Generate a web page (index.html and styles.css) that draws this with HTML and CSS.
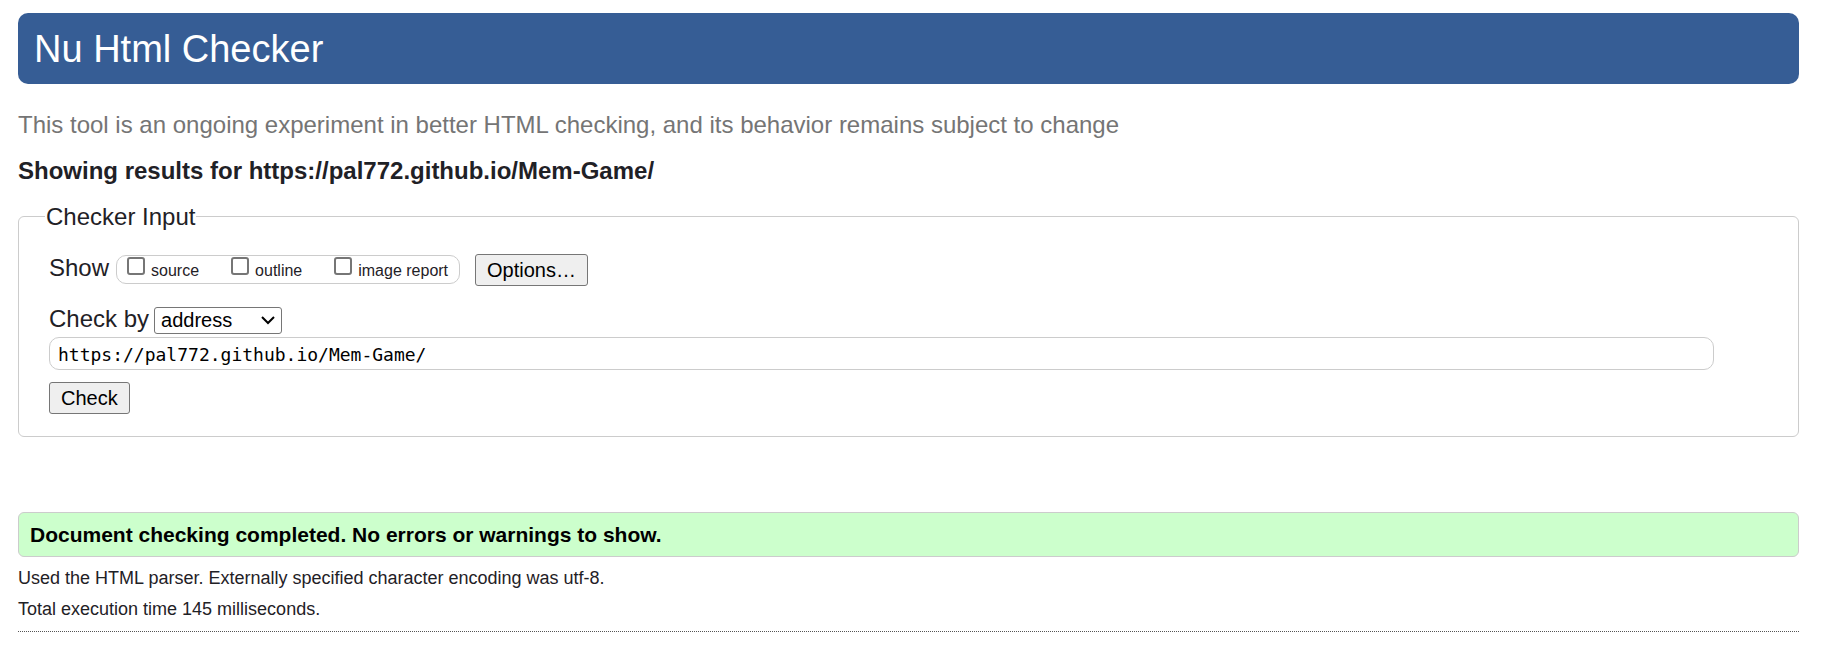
FILE: index.html
```html
<!DOCTYPE html>
<html lang="en">
<head>
<meta charset="utf-8">
<title>Showing results for https://pal772.github.io/Mem-Game/ - Nu Html Checker</title>
<link rel="stylesheet" href="styles.css">
</head>
<body>
<header class="banner"><h1 class="banner-title">Nu Html Checker</h1></header>
<main>
<p class="intro">This tool is an ongoing experiment in better HTML checking, and its behavior remains subject to change</p>
<h2 class="results-title">Showing results for https://pal772.github.io/Mem-Game/</h2>
<form>
<fieldset class="checker">
<legend class="checker-legend">Checker Input</legend>
<div class="row show-row">
<span class="row-label">Show</span>
<div class="show-options">
<label class="option"><input class="tick" type="checkbox" name="showsource"><span class="option-text">source</span></label>
<label class="option"><input class="tick" type="checkbox" name="showoutline"><span class="option-text">outline</span></label>
<label class="option"><input class="tick" type="checkbox" name="showimagereport"><span class="option-text">image report</span></label>
</div>
<button class="button" type="button">Options…</button>
</div>
<div class="row check-row">
<label class="row-label" for="method">Check by</label>
<span class="select-wrap">
<select class="method" id="method"><option>address</option><option>file upload</option><option>text input</option></select>
<svg class="chevron" viewBox="0 0 14 9" aria-hidden="true"><path d="M1 1l6 6 6-6"/></svg>
</span>
</div>
<input class="address" type="text" name="doc" aria-label="Address" spellcheck="false" value="https://pal772.github.io/Mem-Game/">
<button class="button" type="button">Check</button>
</fieldset>
</form>
<p class="success">Document checking completed. No errors or warnings to show.</p>
<p class="detail">Used the HTML parser. Externally specified character encoding was utf-8.</p>
<p class="detail">Total execution time 145 milliseconds.</p>
<hr class="divider">
</main>
</body>
</html>
```
FILE: styles.css
```css
* {
  box-sizing: border-box;
}

body {
  margin: 0;
  padding: 13px 31px 13px 18px;
  background: #fff;
  color: #1f2126;
  font-family: "Liberation Sans", Arial, sans-serif;
  font-size: 24px;
  line-height: 28px;
}

.banner {
  padding: 14px 16px 13px;
  border-radius: 10px;
  background: #365d95;
  color: #fff;
}

.banner-title {
  margin: 0;
  font-size: 38px;
  font-weight: 400;
  line-height: 44px;
}

.intro {
  margin: 27px 0 0;
  color: #757575;
}

.results-title {
  margin: 18px 0 0;
  font-size: 24px;
  font-weight: 700;
}

.checker {
  margin: 18px 0 0;
  padding: 24px 84px 22px 30px;
  border: 1px solid #ccc;
  border-radius: 6px;
  min-width: 0;
}

.checker-legend {
  margin-left: -4px;
  padding: 0 1px;
  line-height: 27px;
}

.row {
  display: flex;
}

.show-row {
  align-items: flex-start;
}

.row-label {
  flex: none;
}

.show-options {
  display: flex;
  gap: 32px;
  height: 29px;
  margin: 1px 15px 0 7px;
  padding: 1px 11px 0 10px;
  border: 1px solid #ccc;
  border-radius: 10px;
}

.option {
  display: flex;
  align-items: flex-start;
  gap: 6px;
  font-size: 16px;
}

.tick {
  flex: none;
  width: 18px;
  height: 18px;
  margin: 0;
  border: 2px solid #767676;
  border-radius: 3px;
  background: #fff;
  appearance: none;
}

.tick:checked {
  background: #365d95;
}

.button {
  height: 32px;
  padding: 0 11px;
  border: 1px solid #767676;
  border-radius: 3px;
  background: #efefef;
  color: #000;
  font-family: inherit;
  font-size: 20px;
  line-height: 28px;
}

.check-row {
  margin-top: 19px;
  gap: 5px;
}

.select-wrap {
  position: relative;
  display: flex;
  align-items: center;
  margin-top: 2px;
}

.method {
  width: 128px;
  height: 27px;
  padding: 0 6px 2px;
  border: 1px solid #767676;
  border-radius: 3px;
  background: #fff;
  color: #000;
  font-family: inherit;
  font-size: 20px;
  appearance: none;
}

.chevron {
  position: absolute;
  right: 7px;
  width: 14px;
  height: 9px;
  fill: none;
  stroke: #000;
  stroke-width: 2;
  pointer-events: none;
}

.address {
  display: block;
  width: 100%;
  height: 33px;
  margin: 3px 0 12px;
  padding: 1px 8px 0;
  border: 1px solid #ccc;
  border-radius: 10px;
  background: #fff;
  color: #000;
  font-family: "DejaVu Sans Mono", monospace;
  font-size: 18px;
}

.success {
  margin: 75px 0 6px;
  padding: 8px 11px 7px;
  border: 1px solid #ccc;
  border-radius: 6px;
  background: #cfc;
  color: #000;
  font-size: 21px;
  font-weight: 700;
}

.detail {
  margin: 0;
  font-size: 18px;
  line-height: 31px;
}

.divider {
  margin: 6px 0 0;
  border: 0;
  border-top: 1px dotted #555;
}
```
